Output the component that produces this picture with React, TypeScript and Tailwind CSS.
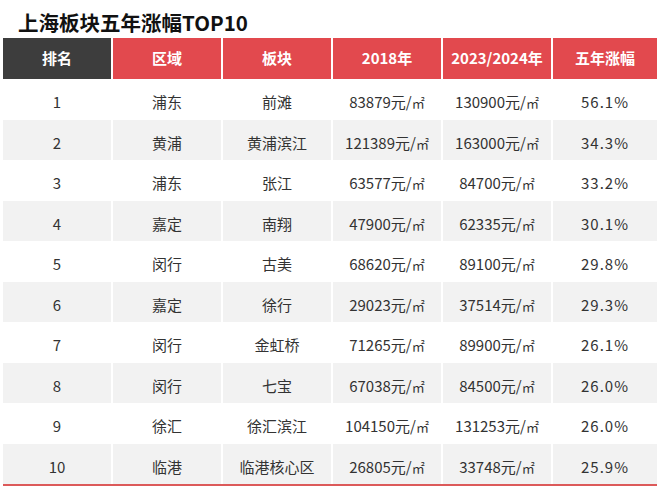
const rows = [
  ['1', '浦东', '前滩', '83879', '130900', '56.1%'],
  ['2', '黄浦', '黄浦滨江', '121389', '163000', '34.3%'],
  ['3', '浦东', '张江', '63577', '84700', '33.2%'],
  ['4', '嘉定', '南翔', '47900', '62335', '30.1%'],
  ['5', '闵行', '古美', '68620', '89100', '29.8%'],
  ['6', '嘉定', '徐行', '29023', '37514', '29.3%'],
  ['7', '闵行', '金虹桥', '71265', '89900', '26.1%'],
  ['8', '闵行', '七宝', '67038', '84500', '26.0%'],
  ['9', '徐汇', '徐汇滨江', '104150', '131253', '26.0%'],
  ['10', '临港', '临港核心区', '26805', '33748', '25.9%'],
];

const headers = ['排名', '区域', '板块', '2018年', '2023/2024年', '五年涨幅'];

const grid = 'grid grid-cols-[108px_108px_108px_108px_108px_104px] gap-x-[2px]';

function Price({ v }: { v: string }) {
  return (
    <span>
      {v}元/<span className="text-[13px]">㎡</span>
    </span>
  );
}

export default function App() {
  return (
    <div className="w-[660px] h-[490px] bg-white overflow-hidden font-['Noto_Sans_CJK_SC','Noto_Sans',sans-serif]">
      <div className="h-[38px] pt-[12px] pl-[18px] text-[20.5px] leading-[21px] font-bold text-[#111]">
        上海板块五年涨幅TOP10
      </div>
      <div className="pl-[3px]">
        <div className={`${grid} h-[41px] text-[15px] font-bold text-white`}>
          {headers.map((h, i) => (
            <div
              key={h}
              className={`flex items-center justify-center ${i === 0 ? 'bg-[#3d3d3d]' : 'bg-[#e2494e]'}`}
            >
              {h}
            </div>
          ))}
        </div>
        {rows.map((r, idx) => (
          <div key={r[0]} className={`${grid} h-[40.5px] text-[15px] text-[#333]`}>
            {r.map((c, i) => (
              <div
                key={i}
                className={`flex items-center justify-center pt-[6px] ${i === 5 ? 'tracking-[1px]' : ''} ${idx % 2 === 1 ? 'bg-[#f2f2f2]' : 'bg-white'}`}
              >
                {i === 3 || i === 4 ? <Price v={c} /> : c}
              </div>
            ))}
          </div>
        ))}
        <div className="w-[654px] h-[2px] bg-[#dc5a5a]" />
      </div>
    </div>
  );
}
